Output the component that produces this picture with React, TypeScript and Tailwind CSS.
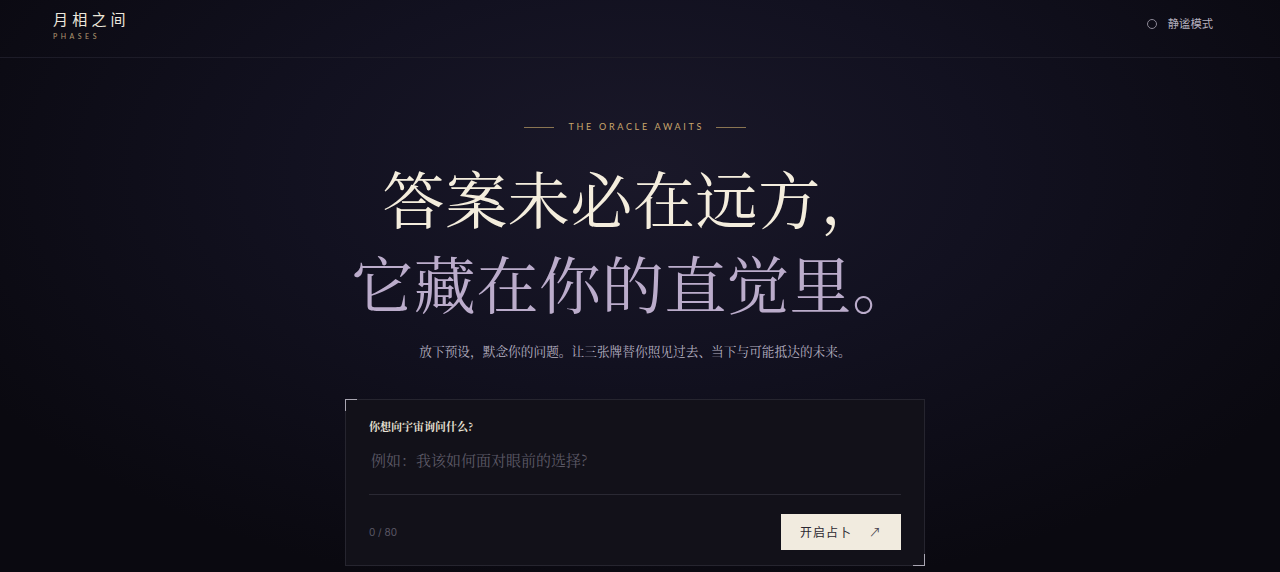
import React from "react";

const serif = '"Noto Serif CJK SC", "Noto Sans CJK SC", serif';
const sans = '"Noto Sans CJK SC", "Noto Sans", sans-serif';

export default function App() {
  return (
    <div
      className="w-full h-[572px] overflow-hidden text-[#e8e3d8] bg-[radial-gradient(ellipse_60%_75%_at_50%_30%,#1a1829_0%,#121120_45%,#0a0910_100%)]"
      style={{ fontFamily: sans }}
    >
      <header className="h-[58px] border-b border-[#1d1c28] flex items-center justify-between pl-[53px] pr-[67px]">
        <div className="flex flex-col -mt-[8px]">
          <span className="text-[15px] leading-[18px] tracking-[0.28em] text-[#ece7dc]">
            月相之间
          </span>
          <span
            className="mt-[4px] text-[7px] leading-[8px] tracking-[0.5em] text-[#b49a72]"
            style={{ fontFamily: 'Lato, "Liberation Sans", sans-serif' }}
          >
            PHASES
          </span>
        </div>
        <div className="flex items-center gap-[11px] -mt-[10px]">
          <span className="w-[10px] h-[10px] rounded-full border border-[#8c8896]" />
          <span className="text-[11.3px] text-[#b4afbd]">静谧模式</span>
        </div>
      </header>

      <main className="flex flex-col items-center pr-[10px]">
        <div className="mt-[63px] flex items-center gap-[12px]">
          <span className="w-[30px] h-px bg-[#8a7552]" />
          <span
            className="text-[9px] leading-[12px] tracking-[0.3em] pl-[0.3em] text-[#c9a66c]"
            style={{ fontFamily: 'Lato, "Liberation Sans", sans-serif' }}
          >
            THE ORACLE AWAITS
          </span>
          <span className="w-[30px] h-px bg-[#8a7552]" />
        </div>

        <h1
          className="mt-[22px] text-center text-[62px] leading-[85px] font-normal tracking-[0.01em] -ml-[4px]"
          style={{ fontFamily: serif }}
        >
          <span className="block text-[#f4eddd]">答案未必在远方，</span>
          <span className="block text-[#bbaccb]">它藏在你的直觉里。</span>
        </h1>

        <p
          className="mt-[16px] text-[12.7px] leading-[20px] text-[#b5b0c0]"
          style={{ fontFamily: serif }}
        >
          放下预设，默念你的问题。让三张牌替你照见过去、当下与可能抵达的未来。
        </p>

        <div className="relative mt-[38px] w-[580px] h-[167px] bg-[#121119] border border-[#26252f] px-[23px] pt-[18px] pb-[15px] flex flex-col">
          <span className="absolute -left-px -top-px w-[12px] h-[12px] border-l border-t border-[#a9a6b2]" />
          <span className="absolute -right-px -bottom-px w-[12px] h-[12px] border-r border-b border-[#a9a6b2]" />
          <label
            className="text-[11px] leading-[16px] font-bold text-[#e6e0d4]"
            style={{ fontFamily: serif }}
          >
            你想向宇宙询问什么?
          </label>
          <div className="mt-[13px] h-[48px] border-b border-[#2a2933] pl-[2px]">
            <span
              className="text-[15px] leading-[22px] text-[#5c5966]"
              style={{ fontFamily: serif }}
            >
              例如：我该如何面对眼前的选择?
            </span>
          </div>
          <div className="mt-[19px] flex items-center justify-between">
            <span
              className="text-[10px] text-[#5b5866]"
              style={{ fontFamily: 'Inter, "Liberation Sans", sans-serif' }}
            >
              0 / 80
            </span>
            <button className="w-[120px] h-[36px] bg-[#f1ebdf] flex items-center justify-between pl-[19px] pr-[20px]">
              <span className="text-[12px] tracking-[0.08em] text-[#2b2831]">开启占卜</span>
              <span className="text-[12px] text-[#4a4650]">↗</span>
            </button>
          </div>
        </div>
      </main>
    </div>
  );
}
